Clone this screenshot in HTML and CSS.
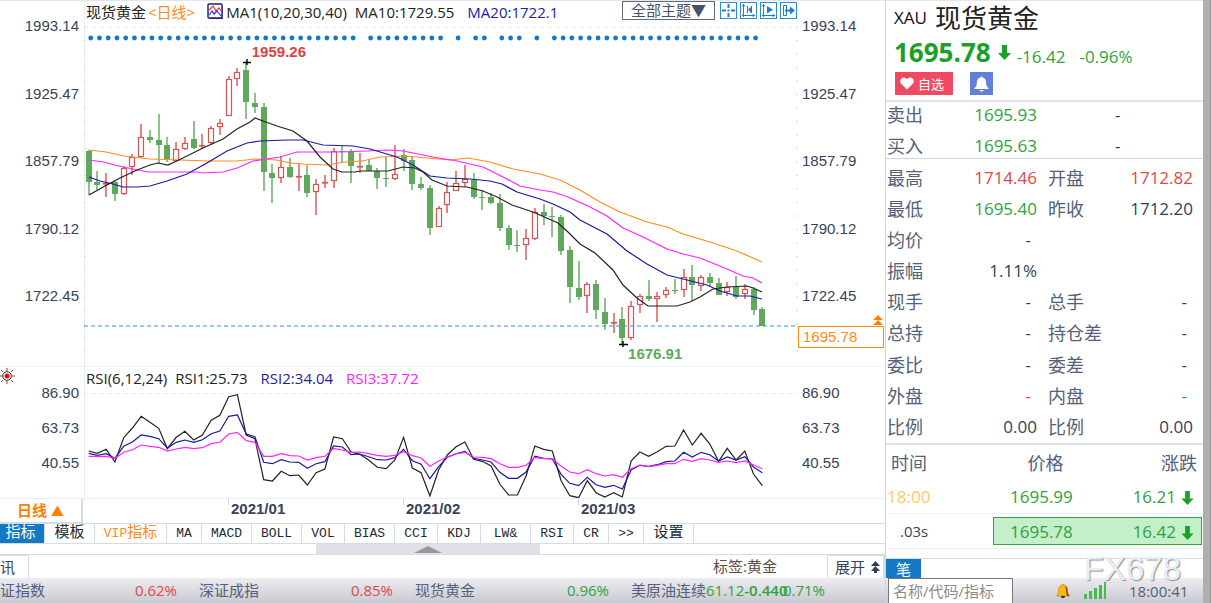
FILE: index.html
```html
<!DOCTYPE html>
<html lang="zh-CN">
<head>
<meta charset="utf-8">
<meta name="viewport" content="width=device-width, initial-scale=1">
<title>现货黄金</title>
<link rel="stylesheet" href="styles.css">
</head>
<body>
<div class="terminal">
  <main class="main">
    <section class="pane price-pane" aria-label="现货黄金日线">
      <div class="axis axis-left price-axis"><span>1993.14</span><span>1925.47</span><span>1857.79</span><span>1790.12</span><span>1722.45</span></div>
      <div class="plot">
        <svg class="chart" id="price-chart" viewBox="84 0 714 366" preserveAspectRatio="none" aria-hidden="true"></svg>
        <div class="legend">
          <span>现货黄金</span><span class="orange">&lt;日线&gt;</span>
          <svg class="legend-icon" width="16" height="16" viewBox="0 0 16 16" aria-hidden="true"><rect x="1" y="1" width="14" height="14" rx="1" fill="#fff" stroke="#1c1c78" stroke-width="1.4"/><path d="M2 7l4-4 3 5 3-3 2 3" fill="none" stroke="#f33" stroke-width="1.2"/><path d="M2 12l3-4 2 3 3-3 4 5" fill="none" stroke="#33c" stroke-width="1.2"/><path d="M3 15.4h13V4" fill="none" stroke="#1c1c78"/></svg>
          <span class="ma-main">MA1(10,20,30,40)</span><span class="ma-black">MA10:1729.55</span><span class="navy">MA20:1722.1</span>
        </div>
        <div class="tools">
          <select class="theme" aria-label="主题"><option>全部主题▼</option></select>
          <button class="tool" aria-label="十字光标"><svg viewBox="0 0 15 15"><path d="M7.500 1v4M7.500 10v4M1 7.500h4M10 7.500h4M6.500 7.500h2"/></svg></button>
          <button class="tool" aria-label="起点"><svg viewBox="0 0 15 15"><path d="M2.500 1v13M1 12.500h13M1 3.500l1.500-2 1.500 2M11.500 11l2 1.500-2 1.500M6.500 3v7M10.500 3v7" class="thin"/><path d="M7 6.500l3.500-3v7z" class="solid"/></svg></button>
          <button class="tool" aria-label="播放"><svg viewBox="0 0 15 15"><path d="M2.500 1v13M1 12.500h13M1 3.500l1.500-2 1.500 2M11.500 11l2 1.500-2 1.500" class="thin"/><path d="M6 3l6 3.700-6 3.800z" class="solid"/></svg></button>
          <button class="tool" aria-label="移至右侧"><svg viewBox="0 0 15 15"><path d="M2.500 2.500h3v10h-3z" class="thin"/><path d="M4 7.500h6"/><path d="M9 3.500l5 4-5 4z" class="solid"/></svg></button>
        </div>
        <b class="mark mark-high">1959.26</b>
        <b class="mark mark-low">1676.91</b>
      </div>
      <div class="axis axis-right price-axis"><span>1993.14</span><span>1925.47</span><span>1857.79</span><span>1790.12</span><span>1722.45</span>
        <div class="current">1695.78<svg class="current-arrow" width="10" height="11" viewBox="0 0 10 11" aria-hidden="true"><path d="M5 0l5 5H0zM5 5l5 5H0z" fill="#ff7f00"/></svg></div>
      </div>
    </section>

    <section class="pane rsi-pane" aria-label="RSI">
      <div class="axis axis-left rsi-axis"><span>86.90</span><span>63.73</span><span>40.55</span>
        <svg class="sun" width="16" height="16" viewBox="1 0 16 16" aria-hidden="true"><path d="M8 0v3M8 13v3M0 8h3M13 8h3M2 2l2 2M12 12l2 2M14 2l-2 2M4 12l-2 2" stroke="#e02020" fill="none"/><circle cx="8" cy="8" r="4.300" fill="#fff" stroke="#222"/><circle cx="8" cy="8" r="2.500" fill="#e01010"/></svg>
      </div>
      <div class="plot">
        <svg class="chart" id="rsi-chart" viewBox="84 366 714 132" preserveAspectRatio="none" aria-hidden="true"></svg>
        <div class="legend rsi-legend"><span>RSI(6,12,24)</span><span class="rsi-one">RSI1:25.73</span><span class="navy">RSI2:34.04</span><span class="magenta">RSI3:37.72</span></div>
      </div>
      <div class="axis axis-right rsi-axis"><span>86.90</span><span>63.73</span><span>40.55</span></div>
    </section>

    <div class="dates">
      <button class="period">日线 <i>▲</i></button>
      <div class="months"><span>2021/01</span><span>2021/02</span><span>2021/03</span></div>
    </div>

    <nav class="tabs">
      <button class="tab zh active">指标</button><button class="tab zh four">模板</button><button class="tab vip">VIP<span>指标</span></button><button class="tab two">MA</button><button class="tab four">MACD</button><button class="tab four">BOLL</button><button class="tab three">VOL</button><button class="tab four">BIAS</button><button class="tab three">CCI</button><button class="tab three">KDJ</button><button class="tab four">LW&amp;</button><button class="tab three">RSI</button><button class="tab two">CR</button><button class="tab two">&gt;&gt;</button><button class="tab zh four">设置</button>
    </nav>

    <div class="slider"><div class="thumb"><svg width="28" height="7" viewBox="0 0 28 7" aria-hidden="true"><path d="M14 0l14 7H0z" fill="#999"/></svg></div></div>

    <div class="news">
      <span class="news-tab">讯</span>
      <span class="tag">标签:黄金</span>
      <button class="expand">展开 <svg width="9" height="12" viewBox="0 0 9 12" aria-hidden="true"><path d="M4.500 0L9 5H0zM4.500 5L9 10H0zM3 10h3v2H3z" fill="#333f50"/></svg></button>
    </div>

    <div class="ticker">
      <div class="quote first"><span>证指数</span><span class="red">0.62%</span></div>
      <div class="quote"><span>深证成指</span><span class="red">0.85%</span></div>
      <div class="quote"><span>现货黄金</span><span class="green">0.96%</span></div>
      <div class="quote"><span>美原油连续<span class="green">61.12<span class="delta">-0.440</span></span></span><span class="green overlap">0.71%</span></div>
    </div>
  </main>

  <aside class="side">
    <header class="head">
      <h1><small>XAU</small>现货黄金</h1>
      <p class="last"><b>1695.78</b><svg class="down" width="13" height="16" viewBox="0 0 13 16" aria-hidden="true"><path d="M4 0h5v8h4l-6.500 7L0 8h4z"/></svg><span>-16.42</span><span>-0.96%</span></p>
      <div class="actions">
        <button class="fav"><svg width="14" height="13" viewBox="0 0 14 13" aria-hidden="true"><path d="M7 12.500L1 6.500C-1 4 1 .5 4 .5c1.500 0 2.500 1 3 2 .5-1 1.500-2 3-2 3 0 5 3.500 3 6z" fill="#fff"/></svg>自选</button>
        <button class="alert" aria-label="提醒"><svg width="15" height="16" viewBox="0 0 15 16" aria-hidden="true"><path d="M7.500 0l1 1.500c3 .7 3.700 3 3.700 6 0 2.500 1 3.500 2.300 4.500v1H.5v-1c1.300-1 2.300-2 2.300-4.500 0-3 .7-5.300 3.700-6zM5.500 14h4c-.5 2-3.500 2-4 0z" fill="#fff"/></svg></button>
      </div>
    </header>

    <div class="facts bidask">
      <span>卖出</span><b class="green">1695.93</b><span></span><b class="mid">-</b>
      <span>买入</span><b class="green">1695.63</b><span></span><b class="mid">-</b>
    </div>
    <div class="facts details">
      <span>最高</span><b class="red">1714.46</b><span>开盘</span><b class="red">1712.82</b>
      <span>最低</span><b class="green">1695.40</b><span>昨收</span><b>1712.20</b>
      <span>均价</span><b class="dash">-</b><span></span><b></b>
      <span>振幅</span><b>1.11%</b><span></span><b></b>
      <span>现手</span><b class="dash">-</b><span>总手</span><b class="dash">-</b>
      <span>总持</span><b class="dash">-</b><span>持仓差</span><b class="dash">-</b>
      <span>委比</span><b class="dash">-</b><span>委差</span><b class="dash">-</b>
      <span>外盘</span><b class="dash red">-</b><span>内盘</span><b class="dash green">-</b>
      <span>比例</span><b>0.00</b><span>比例</span><b>0.00</b>
    </div>

    <table class="trades">
      <thead><tr><th class="time-head">时间</th><th>价格</th><th class="change-head">涨跌</th></tr></thead>
      <tbody>
        <tr class="trade"><td class="hour">18:00</td><td class="green price">1695.99</td><td class="green change">16.21<svg class="down" width="13" height="15" viewBox="0 0 13 16" aria-hidden="true"><path d="M4 0h5v8h4l-6.500 7L0 8h4z"/></svg></td></tr>
        <tr class="trade latest"><td class="seconds">.03s</td><td colspan="2"><div class="hit green"><span>1695.78</span><span>16.42<svg class="down" width="13" height="15" viewBox="0 0 13 16" aria-hidden="true"><path d="M4 0h5v8h4l-6.500 7L0 8h4z"/></svg></span></div></td></tr>
      </tbody>
    </table>

    <div class="side-tabs"><button class="tick-tab">笔</button><span class="watermark">FX678</span></div>

    <footer class="status">
      <input class="search" type="text" aria-label="名称/代码/指标" placeholder="名称/代码/指标">
      <svg class="bell" width="14" height="16" viewBox="0 0 14 16" aria-hidden="true"><path d="M7 1l1 1c3 .8 3.500 3 3.500 5.500 0 2.500.8 4 2.200 5.500H.5C2 11.500 2.500 10 2.500 7.500 2.500 5 3 2.800 6 2z" fill="#fdb813" stroke="#c47a00" stroke-width=".6"/><path d="M9 3c2 1 2.500 3 2.500 5s.8 3.500 2 5H11c-1-2-.5-7-2-10z" fill="#8a4b00"/><path d="M5 13h4c0 3-4 3-4 0z" fill="#333"/></svg>
      <svg width="23" height="17" viewBox="0 0 23 17" aria-hidden="true"><path d="M0 12h3v5H0zM5 9h3v8H5zM10 6h3v11h-3zM15 3h3v14h-3zM20 0h2v17h-2z" fill="#45bd51"/></svg>
      <time>18:00:41</time>
    </footer>
  </aside>
  <div class="scrollbar"></div>
</div>
<script src="app.js"></script>
</body>
</html>
```
FILE: styles.css
```css
* { box-sizing: border-box; }

body {
  margin: 0;
  background: #fff;
  color: #37435a;
  font: 15px/20px "Open Sans", "Noto Sans CJK SC", sans-serif;
}

button, input, select { font: inherit; color: inherit; margin: 0; }
button { border: 0; padding: 0; background: none; cursor: pointer; }

.orange { color: #ff8a1a; }
.navy { color: #1d1da8; }
.magenta { color: #ff22ff; }
.red { color: #e24848; }
.green { color: #2fa33b; }
.down { fill: #1ba025; }

.terminal {
  display: grid;
  grid-template-columns: minmax(0, 885fr) 318px 8px;
  min-height: 100vh;
  overflow: hidden;
}

/* chart column */
.main {
  display: grid;
  grid-template-rows: minmax(300px, 366fr) minmax(120px, 132fr) 25px 21px 11px 23px 25px;
  box-shadow: inset 0 1px #e4e6e8;
  min-height: 0;
}

.pane { display: grid; grid-template-columns: 84px minmax(0, 1fr) 87px; }
.rsi-pane { box-shadow: inset 0 1px #edf2f5; }
.plot { position: relative; box-shadow: inset 1px 0 #e4edf2; }
.chart { position: absolute; inset: 0; width: 100%; height: 100%; display: block; }

.axis {
  position: relative;
  display: flex;
  flex-direction: column;
  justify-content: space-between;
  font-family: "Liberation Sans", sans-serif;
}
.axis-left { align-items: flex-end; padding-right: 5px; }
.axis-right { padding-left: 4px; }
.price-axis { padding-top: 16px; padding-bottom: 60px; }
.rsi-axis { padding-top: 17px; padding-bottom: 25px; }
.sun { position: absolute; left: 0; top: 2px; }

.current {
  position: absolute;
  left: 0;
  right: 1px;
  top: 89%;
  padding-left: 4px;
  border: 1px solid #ff8a1a;
  color: #ff8a1a;
  background: #fff;
}
.current-arrow { position: absolute; right: 0; top: -12px; }

.legend {
  position: absolute;
  left: 2px;
  top: 2px;
  display: flex;
  align-items: center;
  white-space: nowrap;
  color: #222;
}
.legend-icon { margin: -3px 3px 0 10px; }
.legend .orange { color: #ff8a1a; margin: 0 2px; }
.legend .navy { color: #1d1da8; margin-left: 13px; }
.legend .magenta { color: #ff22ff; margin-left: 13px; }
.ma-main { margin-right: 3px; }
.ma-black { margin-left: 5px; }
.rsi-one { margin-left: 8px; }

.tools { position: absolute; right: 1px; top: 1px; display: flex; gap: 3px; }
.theme {
  appearance: none;
  width: 93px;
  height: 19px;
  margin-right: 2px;
  padding: 0 0 0 8px;
  border: 1px solid #5d6b80;
  border-radius: 0;
  background: #fff;
  color: #455369;
  line-height: 17px;
}
.tool { width: 17px; height: 17px; margin-top: 1px; border: 1px solid #2b8bd4; }
.tool svg { display: block; width: 100%; height: 100%; fill: none; stroke: #1b7fcb; stroke-width: 2; }
.tool .thin { stroke-width: 1; }
.tool .solid { fill: #1b7fcb; stroke: none; }

.mark { position: absolute; font-family: "Liberation Sans", sans-serif; }
.mark-high { left: 23.5%; top: 11.4%; color: #d94343; }
.mark-low { left: 76.2%; top: 94%; color: #5fa85c; }

.dates { display: grid; grid-template-columns: 83px minmax(0, 1fr); border-top: 1px solid #e8f0f4; }
.period {
  border-right: 2px solid #d3dde5;
  border-bottom: 1px solid #d3dde5;
  color: #ff7f00;
  font-weight: bold;
}
.period i { font-style: normal; font-size: 13px; }
.months { display: flex; padding-left: 145px; }
.months span {
  width: 175px;
  height: 19px;
  padding-left: 3px;
  font: bold 15px/20px "Liberation Sans", sans-serif;
  background: linear-gradient(#cdd6de, #cdd6de) no-repeat 0 0 / 1px 6px;
}

.tabs { display: flex; border-top: 1px solid #d3dde5; border-bottom: 1px solid #d3dde5; }
.tab {
  flex: none;
  border-right: 1px solid #d3dde5;
  font: 13px/19px "Liberation Mono", "Noto Sans CJK SC", monospace;
  color: #222b38;
}
.tab.zh { font-size: 15px; }
.tab.active { width: 45px; background: #1478c4; color: #fff; padding-right: 3px; }
.tab.vip { width: 72px; color: #ff8a1a; }
.tab.vip span { font-size: 15px; }
.two { width: 35px; }
.three { width: 43px; }
.four { width: 50px; }

.slider { display: grid; grid-template-columns: 316fr 224fr 345fr; border-bottom: 1px solid #d3dde5; }
.thumb { grid-column: 2; display: flex; align-items: center; justify-content: center; background: #dfe0e8; }

.news { display: flex; align-items: stretch; line-height: 22px; }
.news-tab { width: 29px; border-right: 1px solid #d3dde5; border-top: 1px solid #d3dde5; }
.tag { margin-left: auto; margin-right: 50px; color: #5a4a48; }
.expand {
  width: 58px;
  display: flex;
  align-items: center;
  justify-content: flex-end;
  gap: 6px;
  padding-right: 3px;
  border: solid #d3dde5;
  border-width: 1px 2px 0 1px;
}

.ticker, .status { background: linear-gradient(#ececf1, #c9c9d1); }
.ticker { display: flex; gap: 22px; overflow: hidden; color: #53617a; line-height: 25px; white-space: nowrap; }
.quote { flex: none; width: 194px; display: flex; justify-content: space-between; }
.quote.first { width: 177px; }
.overlap { margin-left: -16px; }
.delta { font-weight: 600; }

/* quote column */
.side {
  display: flex;
  flex-direction: column;
  border-left: 1px solid #cbd6df;
  border-top: 1px solid #e4e6e8;
  min-height: 0;
}
.head { height: 101px; padding: 0 8px; border-bottom: 2px solid #dfe5ea; }
.head h1 {
  margin: 0;
  display: flex;
  align-items: center;
  gap: 8px;
  color: #222;
  font-size: 26px;
  font-weight: 400;
  line-height: 34px;
}
.head h1 small { font-size: 17px; color: #111; }
.last { display: flex; align-items: center; margin: 0; height: 35px; font-size: 17px; color: #2fa33b; }
.last b { font-size: 26px; line-height: 35px; color: #1ba025; }
.last .down { margin: 0 6px 0 7px; }
.last span { margin-right: 14px; padding-top: 8px; }
.actions { display: flex; gap: 17px; padding: 2px 0 0 1px; }
.fav {
  display: flex;
  align-items: center;
  gap: 4px;
  width: 58px;
  height: 23px;
  padding-left: 5px;
  background: #f04a63;
  color: #fff;
  font-size: 13px;
}
.alert { width: 23px; height: 23px; display: grid; place-items: center; background: #6181d8; }

.facts {
  display: grid;
  grid-template-columns: 50px 100px 59px minmax(0, 1fr);
  padding: 0 10px 0 1px;
  font-size: 18px;
  align-items: center;
  color: #53617a;
  line-height: 26px;
}
.facts b { font-size: 17px; font-weight: 400; text-align: right; color: #333f55; }
.facts b.green { color: #2fa33b; }
.facts b.red { color: #e24848; }
.facts span:nth-child(4n + 3) { padding-left: 11px; white-space: nowrap; margin-right: -20px; }
.facts .dash { padding-right: 6px; }
.facts b.mid { text-align: left; padding-left: 19px; }
.bidask { height: 57px; border-bottom: 1px solid #cbd6df; grid-auto-rows: 31px; align-content: center; }
.details { flex: 1 0 285px; padding-top: 3px; grid-auto-rows: 1fr; border-bottom: 2px solid #dfe5ea; }

.trades { width: 100%; border-collapse: collapse; table-layout: fixed; font-size: 17px; }
.trades th { height: 37px; padding: 0; font-weight: 400; font-size: 18px; color: #53617a; }
.trades th:first-child { width: 107px; }
.trades .time-head { text-align: left; padding-left: 5px; }
.trades .change-head { text-align: right; padding-right: 6px; }
.trades td { padding: 0; }
.trade { height: 32px; border-bottom: 1px solid #edf1f4; }
.trade.latest { height: 35px; }
.trades .hour { padding-left: 1px; color: #ffc966; }
.trades .price { padding-left: 17px; }
.trades .change { text-align: right; padding-right: 9px; }
.change .down, .hit .down { margin-left: 5px; vertical-align: -3px; }
.trades .seconds { padding-left: 14px; }
.seconds { font-size: 15px; }
.hit {
  display: flex;
  justify-content: space-between;
  margin-right: 1px;
  padding: 1px 7px 0 16px;
  border: 1px solid #31a83c;
  background: #c3f0c8;
  line-height: 25px;
}

.side-tabs {
  position: relative;
  height: 20px;
  margin-top: 9px;
  border-top: 1px solid #d3dde5;
}
.tick-tab { display: block; width: 35px; height: 19px; background: #1478c4; color: #fff; line-height: 18px; }
.watermark {
  position: absolute;
  right: 22px;
  top: -7px;
  z-index: 1;
  color: #e3effa;
  font: 33px/34px "Liberation Sans", sans-serif;
  text-shadow: 1px 1px 1px #a08a84;
}
.status { display: flex; align-items: center; height: 25px; padding-left: 2px; color: #53617a; }
.search {
  width: 125px;
  height: 25px;
  padding: 0 4px;
  border: 1px solid #777;
  border-bottom: 0;
  border-radius: 0;
  background: #fff;
}
.search::placeholder { color: #8b8b8b; opacity: 1; }
.bell { margin: 0 14px 0 43px; }
.status time { margin-left: 22px; }

.scrollbar { background: #afafaf; border-right: 1px solid #969696; }
```
FILE: app.js
```js
const NS = 'http://www.w3.org/2000/svg';
const UP = '#d9534f';
const DOWN = '#5fa85c';
const slotX = i => 88.7 + 8.748 * i;

function add(parent, name, attrs) {
  const el = document.createElementNS(NS, name);
  for (const key in attrs) el.setAttribute(key, attrs[key]);
  parent.appendChild(el);
  return el;
}

function line(parent, points, color) {
  add(parent, 'polyline', { points: points, fill: 'none', stroke: color, 'stroke-width': 1.2 });
}

// direction, body top, body bottom, high, low
const candles = `d 151 182 150 195|d 182 185 171 190|u 183 184 173 197|d 182 194 180 201|u 168 194 166 195|u 157 167 154 175|u 137 157 124 158|d 137 140 130 143|d 140 145 114 164|d 145 159 137 162|u 149 161 142 162|u 143 149 137 150|d 139 148 121 149|u 145 146 134 149|u 128 143 126 144|u 123 127 119 135|u 79 116 76 116|u 72 79 68 86|d 70 102 63 119|d 103 107 93 113|d 107 172 103 191|d 173 178 164 203|u 167 178 156 183|d 167 177 158 178|u 176 176 164 191|d 175 193 165 197|u 184 192 179 215|u 182 183 175 188|u 151 181 148 188|d 151 152 146 162|d 151 166 149 183|u 166 166 153 173|d 165 171 159 171|d 171 178 168 189|d 178 179 157 187|u 174 179 145 180|d 155 161 149 171|d 160 184 156 190|d 184 188 177 190|d 188 228 185 235|u 208 227 206 227|u 192 205 182 213|u 183 191 171 191|u 179 183 165 187|d 180 197 173 199|d 197 198 190 210|d 197 203 193 204|d 203 228 194 231|d 228 245 225 250|d 245 246 230 252|u 238 245 229 260|u 212 239 208 240|d 212 216 204 225|d 216 217 207 237|d 217 251 215 255|d 250 287 246 303|d 288 297 261 300|u 284 296 282 313|d 284 310 280 319|d 312 324 298 330|u 322 323 313 333|d 319 338 307 344|u 306 338 301 340|u 296 305 294 313|d 296 299 280 301|u 296 299 292 322|u 290 295 287 298|d 290 291 279 294|u 277 290 269 297|d 277 285 265 301|u 277 286 275 291|d 277 283 273 287|d 283 295 278 295|u 287 292 282 296|d 287 297 276 299|u 289 294 284 299|d 289 310 287 315|d 309 326 307 326`;

const averages = {
  '#ff8c1a': '89,150 106,152 124,156 150,159 180,160 207,161 236,161 256,159 276,160 291,163 303,164 327,165 345,162 362,161 380,157 406,156 427,158 450,160 468,158 490,162 513,169 540,174 560,180 580,190 600,202 620,212 647,222 667,227 683,234 710,242 737,251 753,258 762,262',
  '#ff22ff': '89,160 103,162 123,167 148,172 197,172 203,173 223,172 237,168 253,161 280,157 297,152 340,152 367,151 387,150 403,151 433,157 457,161 483,167 503,177 520,186 540,190 553,192 568,197 588,206 607,216 623,228 643,237 667,249 683,254 700,258 727,269 743,276 753,278 762,283',
  '#1919a0': '89,177 100,181 113,184 123,187 137,187 150,186 167,181 187,174 207,163 227,151 247,143 260,141 287,140 303,140 323,145 353,146 370,149 397,157 413,165 430,176 447,178 470,179 490,181 502,184 517,192 540,199 553,204 570,212 580,220 607,234 627,251 647,264 667,275 687,280 707,285 720,291 737,296 750,296 762,299',
  '#222': '89,195 105,186 120,178 137,170 150,165 158,163 168,165 183,158 203,148 223,139 237,129 250,122 255,118 263,121 277,126 293,131 307,141 320,157 333,169 342,172 355,172 360,171 388,171 403,167 415,168 423,172 432,180 447,186 467,187 483,191 497,197 512,205 533,212 558,223 568,232 580,244 595,253 613,270 623,285 637,298 648,306 677,306 690,302 700,297 713,289 727,287 747,286 753,288 762,292'
};

// offsets below y = 370, in thirds of a unit
const rsi = {
  '#222': [243,250,238,276,203,174,139,157,175,236,202,184,210,195,151,136,80,74,195,206,329,333,304,317,315,345,308,297,201,206,246,253,270,292,296,270,202,294,308,378,300,254,230,216,268,274,288,343,375,375,318,228,238,243,332,377,383,332,368,381,368,381,273,246,259,245,229,228,180,225,190,222,274,235,270,243,312,347],
  '#1919a0': [250,256,251,265,229,216,195,199,206,234,217,210,217,209,191,183,139,135,192,200,277,281,269,276,277,295,281,275,228,231,254,252,260,269,270,263,238,272,283,326,290,262,251,244,265,270,276,307,325,325,306,259,265,267,313,340,347,322,344,352,346,357,300,286,289,284,275,273,247,261,247,254,273,261,270,260,291,308],
  '#ff22ff': [259,259,259,265,247,239,225,229,232,243,237,232,236,233,221,217,192,187,212,217,259,259,251,257,258,270,263,259,235,240,247,246,251,256,259,256,245,257,264,289,273,261,252,247,261,262,266,281,292,292,286,262,266,266,289,306,311,299,311,318,314,322,296,285,290,286,281,281,268,274,266,270,277,273,278,273,285,296]
};

const price = document.getElementById('price-chart');
add(price, 'path', { d: 'M84 27.500H798', stroke: '#e9e9e9', 'stroke-dasharray': '4 4' });

const gaps = new Set([31, 41, 43, 46, 50, 52]);
for (let i = 0; i < 77; i++) {
  if (!gaps.has(i)) add(price, 'circle', { cx: 90.7 + 8.748 * i, cy: 38, r: 2.4, fill: '#1478c4' });
}

candles.split('|').forEach((row, i) => {
  const [dir, ...rest] = row.split(' ');
  const [top, bottom, high, low] = rest.map(Number);
  const x = Math.round(slotX(i));
  const up = dir === 'u';
  const color = up ? UP : DOWN;
  add(price, 'path', { d: `M${x} ${high}V${low}`, stroke: color, 'stroke-width': 1.4 });
  if (up) {
    add(price, 'rect', { x: x - 2.5, y: top + 0.5, width: 5, height: Math.max(bottom - top - 1, 0.5), fill: '#fff', stroke: color, 'stroke-width': 1.2 });
  } else {
    add(price, 'rect', { x: x - 3, y: top, width: 6, height: Math.max(bottom - top, 1), fill: color });
  }
});

for (const color in averages) line(price, averages[color], color);
add(price, 'path', { d: 'M84 326H798', stroke: '#2b8ff0', 'stroke-width': 1.2, 'stroke-dasharray': '4 3' });
add(price, 'path', { d: 'M243 62.500h8M247 59v6M619 344.500h9M623 341v6', stroke: '#000', 'stroke-width': 1.4 });

// minor ticks along both price scales
for (let y = 27; y < 360; y += 13.5) {
  add(price, 'path', { d: `M84 ${y}h2M796 ${y}h2`, stroke: '#d3dde5' });
}

const rsiChart = document.getElementById('rsi-chart');
add(rsiChart, 'path', { d: 'M84 393.500H798', stroke: '#e9e9e9', 'stroke-dasharray': '4 4' });
for (const color in rsi) {
  line(rsiChart, rsi[color].map((v, i) => `${slotX(i).toFixed(1)},${(370 + v / 3).toFixed(1)}`).join(' '), color);
}
```
